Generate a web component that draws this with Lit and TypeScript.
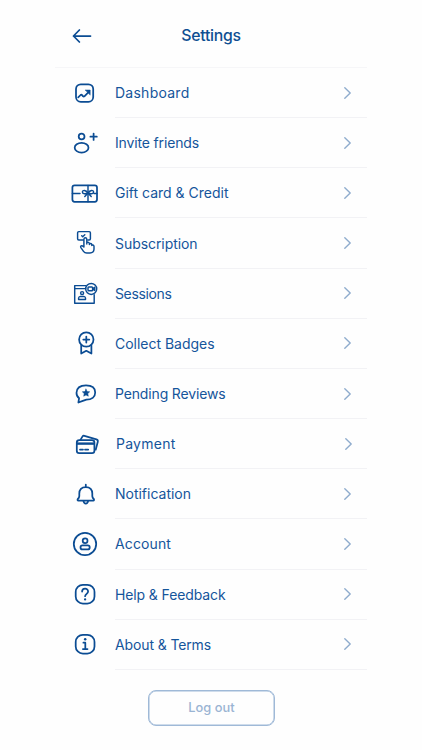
import { LitElement, html, css, svg } from "lit";
import { customElement } from "lit/decorators.js";

interface Row {
  label: string;
  width: number;
  shift?: number;
  icon: unknown;
}

const rows: Row[] = [
  {
    label: "Dashboard",
    width: 74.5,
    icon: svg`<rect x="-9" y="-8.7" width="17.2" height="17.6" rx="4.8"/>
      <path d="M-6.8 4.4 L-4.4 2 Q-3.6 1.4 -2.9 2.1 L-1.9 3.4 Q-1.2 4 -.6 3.3 L3.8 -1.2"/>
      <path class="fill" d="M.4 -3 L5.2 -3 L5.2 1.8 Z"/>`,
  },
  {
    label: "Invite friends",
    width: 84,
    icon: svg`<circle cx="-3.4" cy="-6.5" r="2.9"/>
      <ellipse cx="-3.4" cy="4.7" rx="6.9" ry="4.8"/>
      <path d="M8.6 -9.5V-3.1M5.4 -6.3H11.8"/>`,
  },
  {
    label: "Gift card & Credit",
    width: 113.5,
    icon: svg`<rect x="-12.6" y="-7.6" width="24.6" height="16.4" rx="2.2"/>
      <path class="mid" d="M-12.6 .4H-5M9 .4H12M3 -7.6V8.8"/>
      <path class="mid" d="M3 0C.8 -3.2 -2.4 -3.2 -2.6 -1C-2.6 1.4 .8 1 3 0C5.2 -3.2 8.4 -3.2 8.6 -1C8.6 1.4 5.2 1 3 0L-.2 3.6M3 0L6.2 3.6"/>`,
  },
  {
    label: "Subscription",
    width: 82.5,
    icon: svg`<path class="mid" d="M-1.7 -3H-6.2Q-7.4 -3 -7.4 -4.2V-10.2Q-7.4 -11.4 -6.2 -11.4H4.2Q5.4 -11.4 5.4 -10.2V-4.2Q5.4 -3 4.2 -3H2.8"/>
      <path class="mid" d="M-3.3 -7.2L-2.3 -6.3L-.2 -8.2"/>
      <path class="mid" d="M-1.1 4V-3.7Q-1 -5.2 .3 -5.2Q1.7 -5.2 1.8 -3.7V1V-.4Q3.7 -1.2 4.4 .5V1.6V.6Q6.2 0 6.8 1.4V2.4Q8.8 1.4 9 3.4V6.3Q8.8 10 5 10H1.7Q-.3 10 -1.5 8.3L-4.1 4.6Q-4.9 3 -3.4 2.7Q-2.5 2.7 -1.1 4Z"/>`,
  },
  {
    label: "Sessions",
    width: 56.5,
    icon: svg`<path class="mid" d="M1 -7.4H-10.3V10.2H9.2V1.8M-10.3 -4.4H.7"/>
      <circle class="mid" cx="6.2" cy="-4.1" r="5.5"/>
      <rect class="mid" x="3" y="-6" width="4.6" height="3.8" rx=".8"/>
      <path class="mid" d="M7.7 -4.4L9.7 -5.7V-2.5L7.7 -3.8"/>
      <circle class="mid" cx="-2.9" cy=".1" r="1.5"/>
      <path class="mid" d="M-6.4 6.5V5Q-6.2 3.5 -4.7 3.4H-1.2Q.3 3.5 .5 5V6.5Z"/>`,
  },
  {
    label: "Collect Badges",
    width: 99.5,
    icon: svg`<circle cx="1.3" cy="-3.5" r="7.2"/>
      <path d="M1.3 -6.5V-.5M-1.7 -3.5H4.3M-3.8 2.4V10.6L1.3 7.8L6.4 10.6V2.4"/>`,
  },
  {
    label: "Pending Reviews",
    width: 110.5,
    icon: svg`<path d="M-6.6 8.5L-5.9 4.2Q-8.6 2 -8.5 -1.3C-8.3 -6 -4.8 -8.7 1 -8.7C6.8 -8.7 10.2 -6 10.2 -1.6C10.2 3.1 6.6 5.7 1.4 5.7Q-1.8 6.8 -6.6 8.5Z"/>
      <path class="fill" d="M1 -4.9L2.1 -2.5L4.7 -2.2L2.8 -.4L3.3 2.2L1 .9L-1.3 2.2L-.8 -.4L-2.7 -2.2L-.1 -2.5Z"/>`,
  },
  {
    label: "Payment",
    width: 59.5,
    shift: 1,
    icon: svg`<rect x="-8.2" y="-3.9" width="17.6" height="13" rx="2.4"/>
      <path d="M-8 -.4H9.2" class="bar"/>
      <path d="M-5 5.6H-2M0 5.6H3.2"/>
      <path d="M-4.4 -4.4L-2.6 -7.4Q-1.9 -8.5 -.6 -8.2L11.4 -4.6Q13.2 -3.9 12.8 -2.3L10.7 5.7"/>`,
  },
  {
    label: "Notification",
    width: 76,
    icon: svg`<path d="M.8 -9.4V-7M.8 -7C-3.6 -7 -5.7 -4 -5.7 -.5V2.1Q-5.8 3.8 -7.2 5Q-8 6.5 -6.5 6.7H8.1Q9.6 6.5 8.8 5Q7.4 3.8 7.3 2.1V-.5C7.3 -4 5.2 -7 .8 -7Z"/>
      <path d="M-1.5 7.2Q-1.1 9.6 .8 9.6Q2.7 9.6 3.1 7.2"/>`,
  },
  {
    label: "Account",
    width: 56,
    icon: svg`<circle cx="0" cy="0" r="11.2"/>
      <circle cx=".1" cy="-3.3" r="2.4"/>
      <rect x="-4.5" y="1.4" width="9.2" height="4" rx="2"/>`,
  },
  {
    label: "Help & Feedback",
    width: 110.5,
    icon: svg`<rect x="-9.3" y="-9.2" width="18.8" height="18.8" rx="7.2"/>
      <path d="M-2.9 -2.5C-2.9 -6.4 3.1 -6.4 3.1 -2.5C3.1 -.3 .2 -.1 .1 2.2"/>
      <circle class="dot" cx=".1" cy="5.4" r="1.15"/>`,
  },
  {
    label: "About & Terms",
    width: 96,
    icon: svg`<rect x="-9.3" y="-9.2" width="18.8" height="18.8" rx="7.2"/>
      <path d="M-1.6 -1.3H.3V5M-2.1 5.1H2.5"/>
      <circle class="dot" cx=".2" cy="-4.7" r="1.25"/>`,
  },
];

@customElement("app-root")
export class AppRoot extends LitElement {
  static styles = css`
    :host {
      display: block;
      height: 750px;
      overflow: hidden;
      background: #fefefe;
      font-family: Inter, "Open Sans", sans-serif;
      color: #15559b;
    }
    .screen {
      width: 312px;
      margin-left: 55px;
      display: flex;
      flex-direction: column;
    }
    header {
      height: 67px;
      border-bottom: 1px solid #f6f6f8;
      display: grid;
      grid-template-columns: 56px 1fr 56px;
      align-items: center;
      box-sizing: content-box;
    }
    .back {
      width: 20px;
      height: 16px;
      margin: 4px 0 0 17px;
    }
    h1 {
      margin: 5px 0 0;
      font-size: 15.8px;
      line-height: 22px;
      font-weight: 500;
      text-align: center;
      color: #0f4f92;
    }
    svg {
      display: block;
      fill: none;
      stroke: #0b4c93;
      stroke-width: 1.75;
      stroke-linecap: round;
      stroke-linejoin: round;
    }
    .mid { stroke-width: 1.45; }
    .bar { stroke-width: 2.4; stroke-linecap: butt; }
    .fill { fill: #0b4c93; stroke-width: 0.5; }
    .dot { fill: #0b4c93; stroke: none; }
    ul {
      list-style: none;
      margin: 0;
      padding: 0;
    }
    li {
      height: 50.17px;
      display: flex;
    }
    .icon {
      width: 36px;
      height: 36px;
      margin: 6.6px 12px 0;
      flex: none;
    }
    .body {
      flex: 1;
      display: flex;
      align-items: center;
      justify-content: space-between;
      box-sizing: border-box;
      border-bottom: 1px solid #f2f2f5;
      padding-right: 15px;
    }
    .nudge { padding-left: 1px; padding-right: 14px; }
    .label {
      font-size: 14px;
      line-height: 20px;
      padding-top: 1px;
      white-space: nowrap;
    }
    .chevron {
      width: 9px;
      height: 14px;
      stroke: #8faccd;
      stroke-width: 1.4;
    }
    button {
      width: 127px;
      height: 36px;
      margin: 20px 0 0 93px;
      padding: 1px 0 0;
      border: 1.5px solid #9fb9d7;
      border-radius: 8px;
      background: none;
      box-shadow: inset 0 0 0 0.5px #9fb9d7;
      font: 500 12.8px/20px Inter, "Open Sans", sans-serif;
      color: #9ab4d3;
    }
  `;

  // Tracks each text so that it fills its intended width.
  protected firstUpdated() {
    this.renderRoot.querySelectorAll<HTMLElement>("[data-width]").forEach((el) => {
      const gap = Number(el.dataset.width) - el.getBoundingClientRect().width;
      el.style.letterSpacing = `${gap / (el.textContent ?? "").length}px`;
    });
  }

  render() {
    return html`
      <div class="screen">
        <header>
          <svg class="back" viewBox="0 0 20 16"><path d="M18.5 8H1.5M7.4 2L1.5 8L7.4 14" /></svg>
          <h1><span data-width="59.5">Settings</span></h1>
        </header>
        <ul>
          ${rows.map(
            (r) => html`<li>
              <svg class="icon" viewBox="-18 -18 36 36">${r.icon}</svg>
              <div class="body ${r.shift ? "nudge" : ""}">
                <span class="label" data-width=${r.width}>${r.label}</span>
                <svg class="chevron" viewBox="0 0 9 14"><path d="M1.8 1.7L7.2 7L1.8 12.3" /></svg>
              </div>
            </li>`
          )}
        </ul>
        <button><span data-width="46.5">Log out</span></button>
      </div>
    `;
  }
}
